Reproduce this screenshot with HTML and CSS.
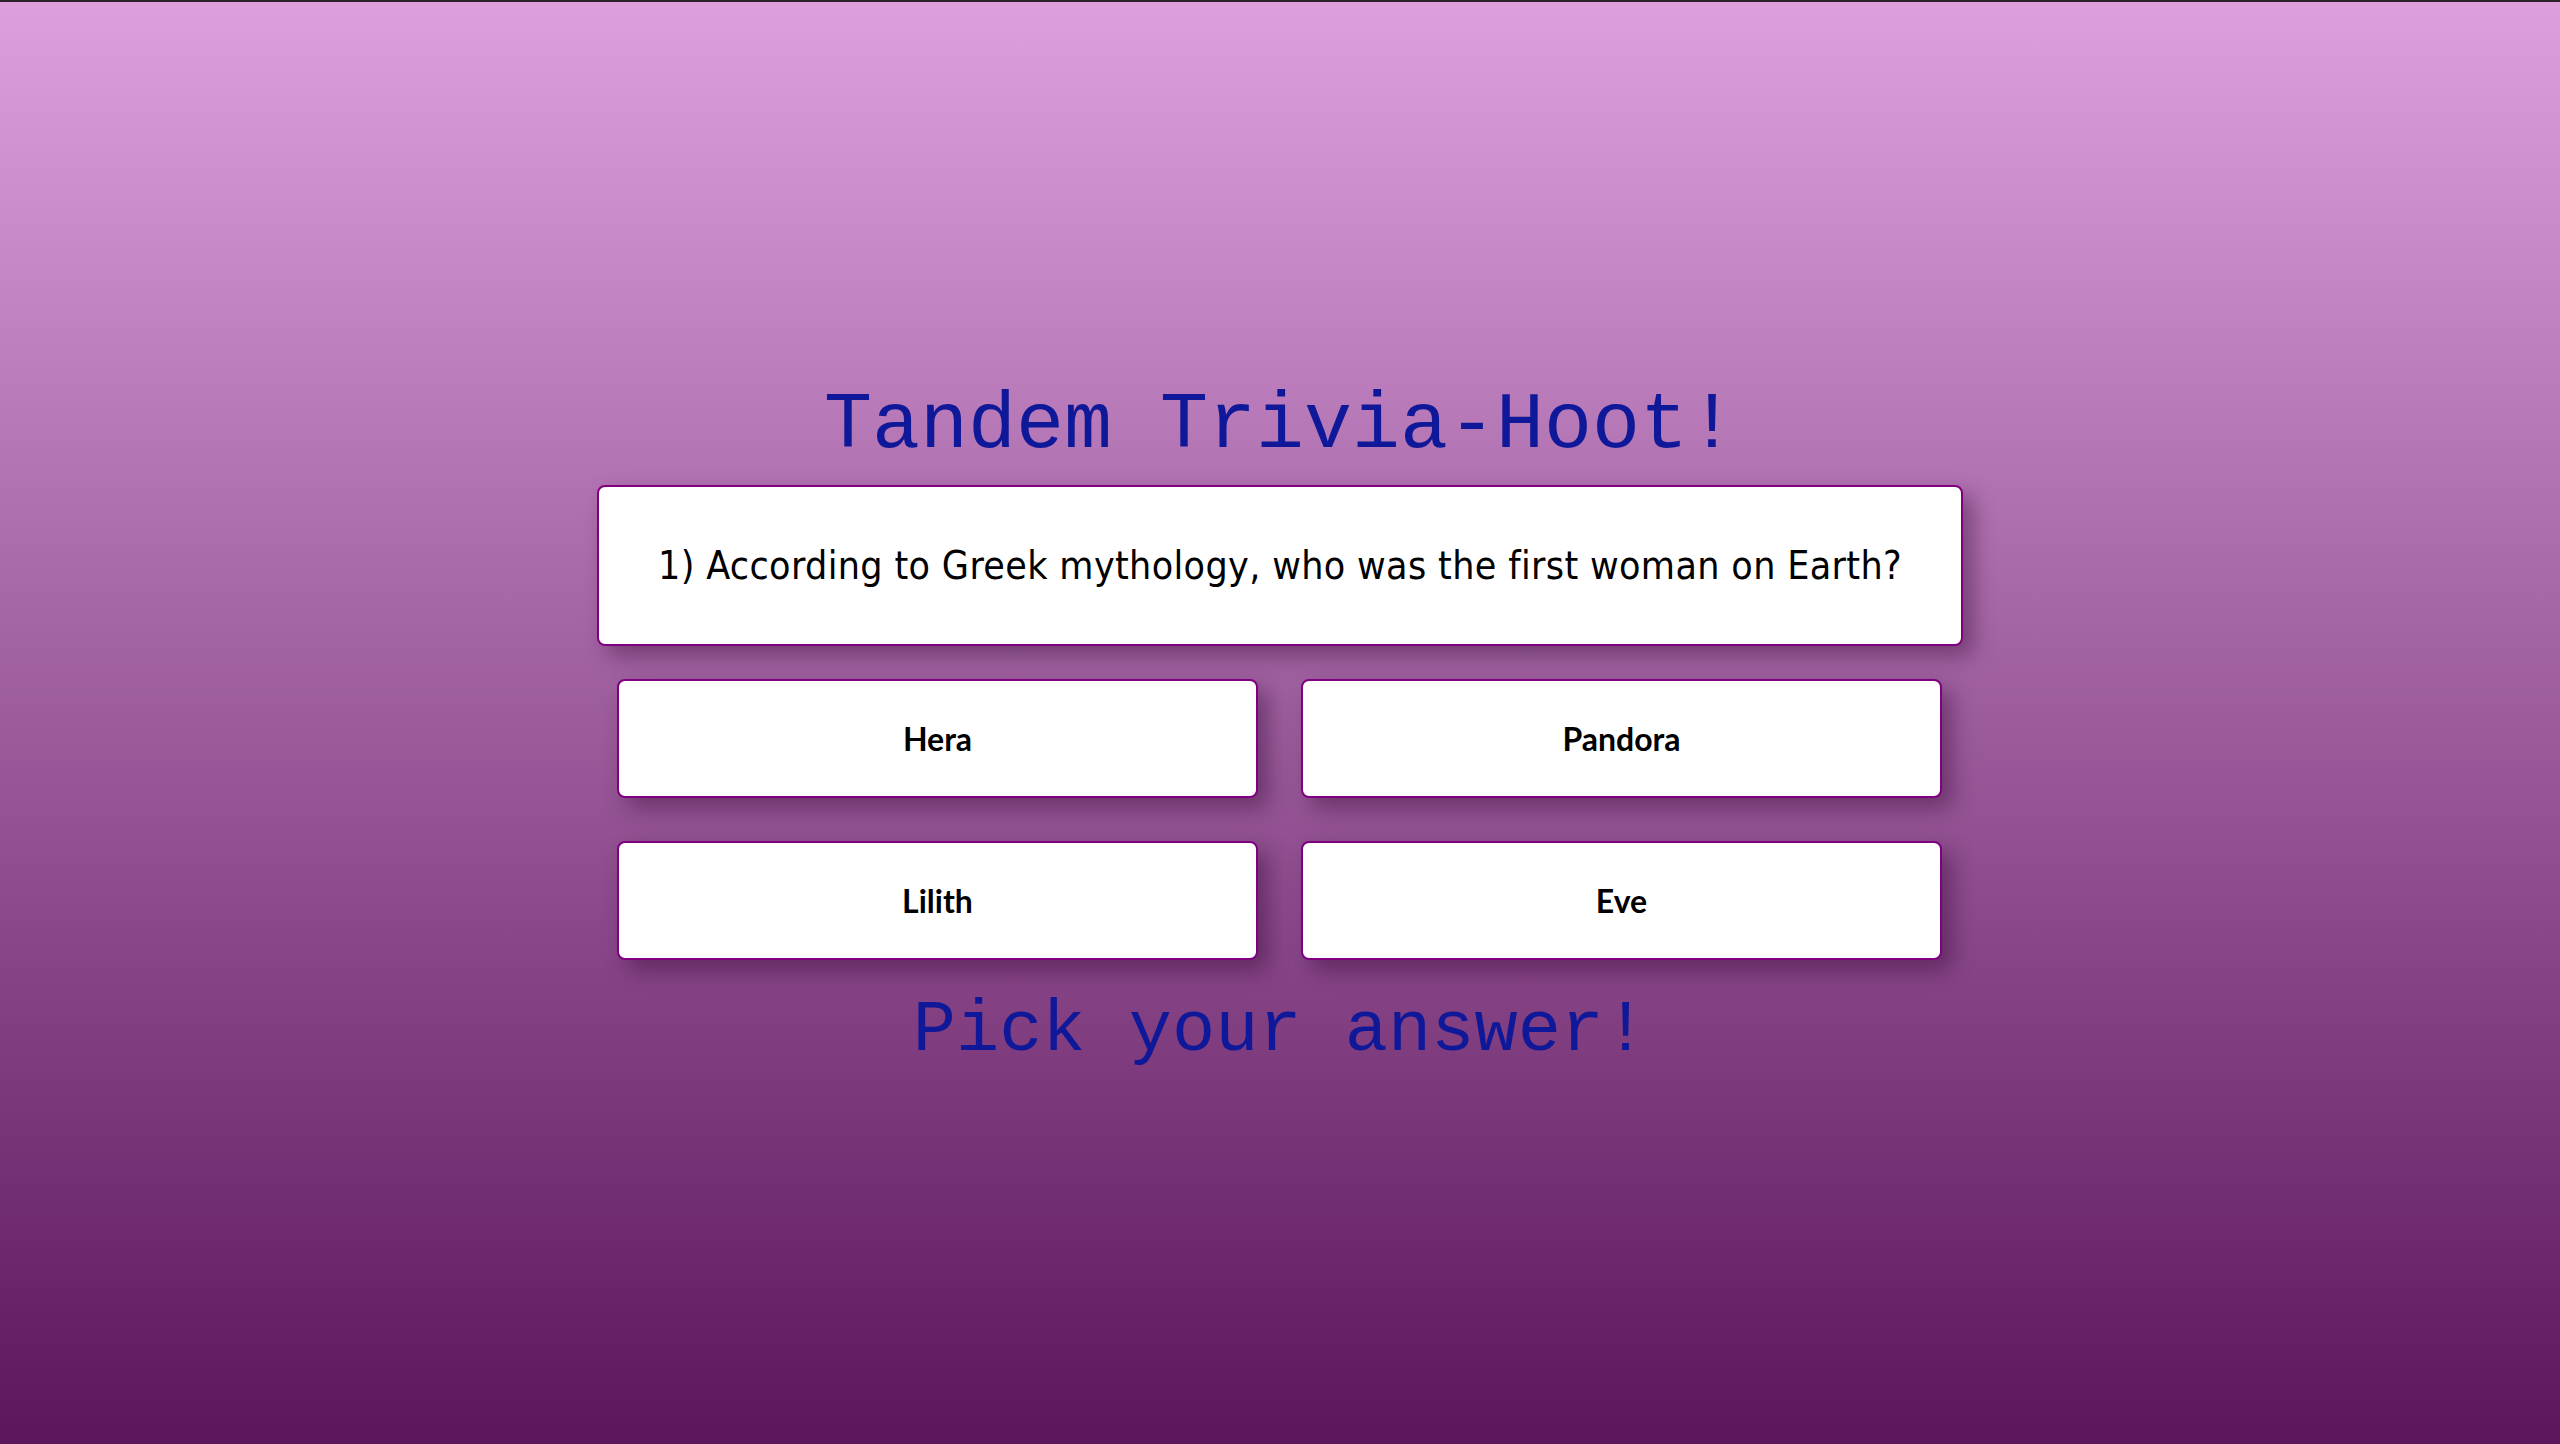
FILE: index.html
```html
<!DOCTYPE html>
<html lang="en">
<head>
<meta charset="utf-8">
<title>Tandem Trivia-Hoot!</title>
<link rel="stylesheet" href="styles.css">
</head>
<body>
<main class="quiz">
  <h1 class="title">Tandem Trivia-Hoot!</h1>
  <div class="question">1) According to Greek mythology, who was the first woman on Earth?</div>
  <div class="answers">
    <button class="answer">Hera</button>
    <button class="answer">Pandora</button>
    <button class="answer">Lilith</button>
    <button class="answer">Eve</button>
  </div>
  <p class="status">Pick your answer!</p>
</main>
</body>
</html>
```
FILE: styles.css
```css
html, body {
  margin: 0;
  padding: 0;
  height: 100%;
}
body {
  border-top: 2px solid #2a2229;
  box-sizing: border-box;
  background: linear-gradient(to bottom, #dda0dd 0%, #9c5c9c 50%, #5c165c 100%);
  font-family: "DejaVu Sans Condensed", Lato, sans-serif;
  overflow: hidden;
}
.quiz {
  width: 1366px;
  margin: 0 auto;
  padding-top: 384px;
  display: flex;
  flex-direction: column;
  align-items: stretch;
}
.title {
  margin: 0 0 19px;
  font-family: "Liberation Mono", "Courier New", monospace;
  font-weight: normal;
  font-size: 80px;
  line-height: 80px;
  color: #0f1898;
  text-align: center;
}
.question {
  box-sizing: border-box;
  height: 161px;
  display: flex;
  align-items: center;
  justify-content: center;
  background: #fff;
  border: 2px solid #800080;
  border-radius: 8px;
  box-shadow: 10px 10px 22px rgba(40, 0, 40, 0.4);
  font-family: "DejaVu Sans Condensed", Lato, sans-serif;
  font-size: 39px;
  letter-spacing: 0.35px;
  color: #000;
}
.answers {
  display: grid;
  grid-template-columns: 1fr 1fr;
  padding: 33px 21px 0 20px;
  column-gap: 43px;
  row-gap: 43px;
}
.answer {
  height: 119px;
  background: #fff;
  border: 2px solid #800080;
  border-radius: 8px;
  box-shadow: 10px 10px 22px rgba(40, 0, 40, 0.4);
  font-family: Lato, "DejaVu Sans Condensed", sans-serif;
  font-weight: bold;
  font-size: 32px;
  color: #000;
  padding: 0;
}
.status {
  margin: 35px 0 0;
  font-family: "Liberation Mono", "Courier New", monospace;
  font-size: 72px;
  line-height: 72px;
  color: #0f1898;
  text-align: center;
}
```
